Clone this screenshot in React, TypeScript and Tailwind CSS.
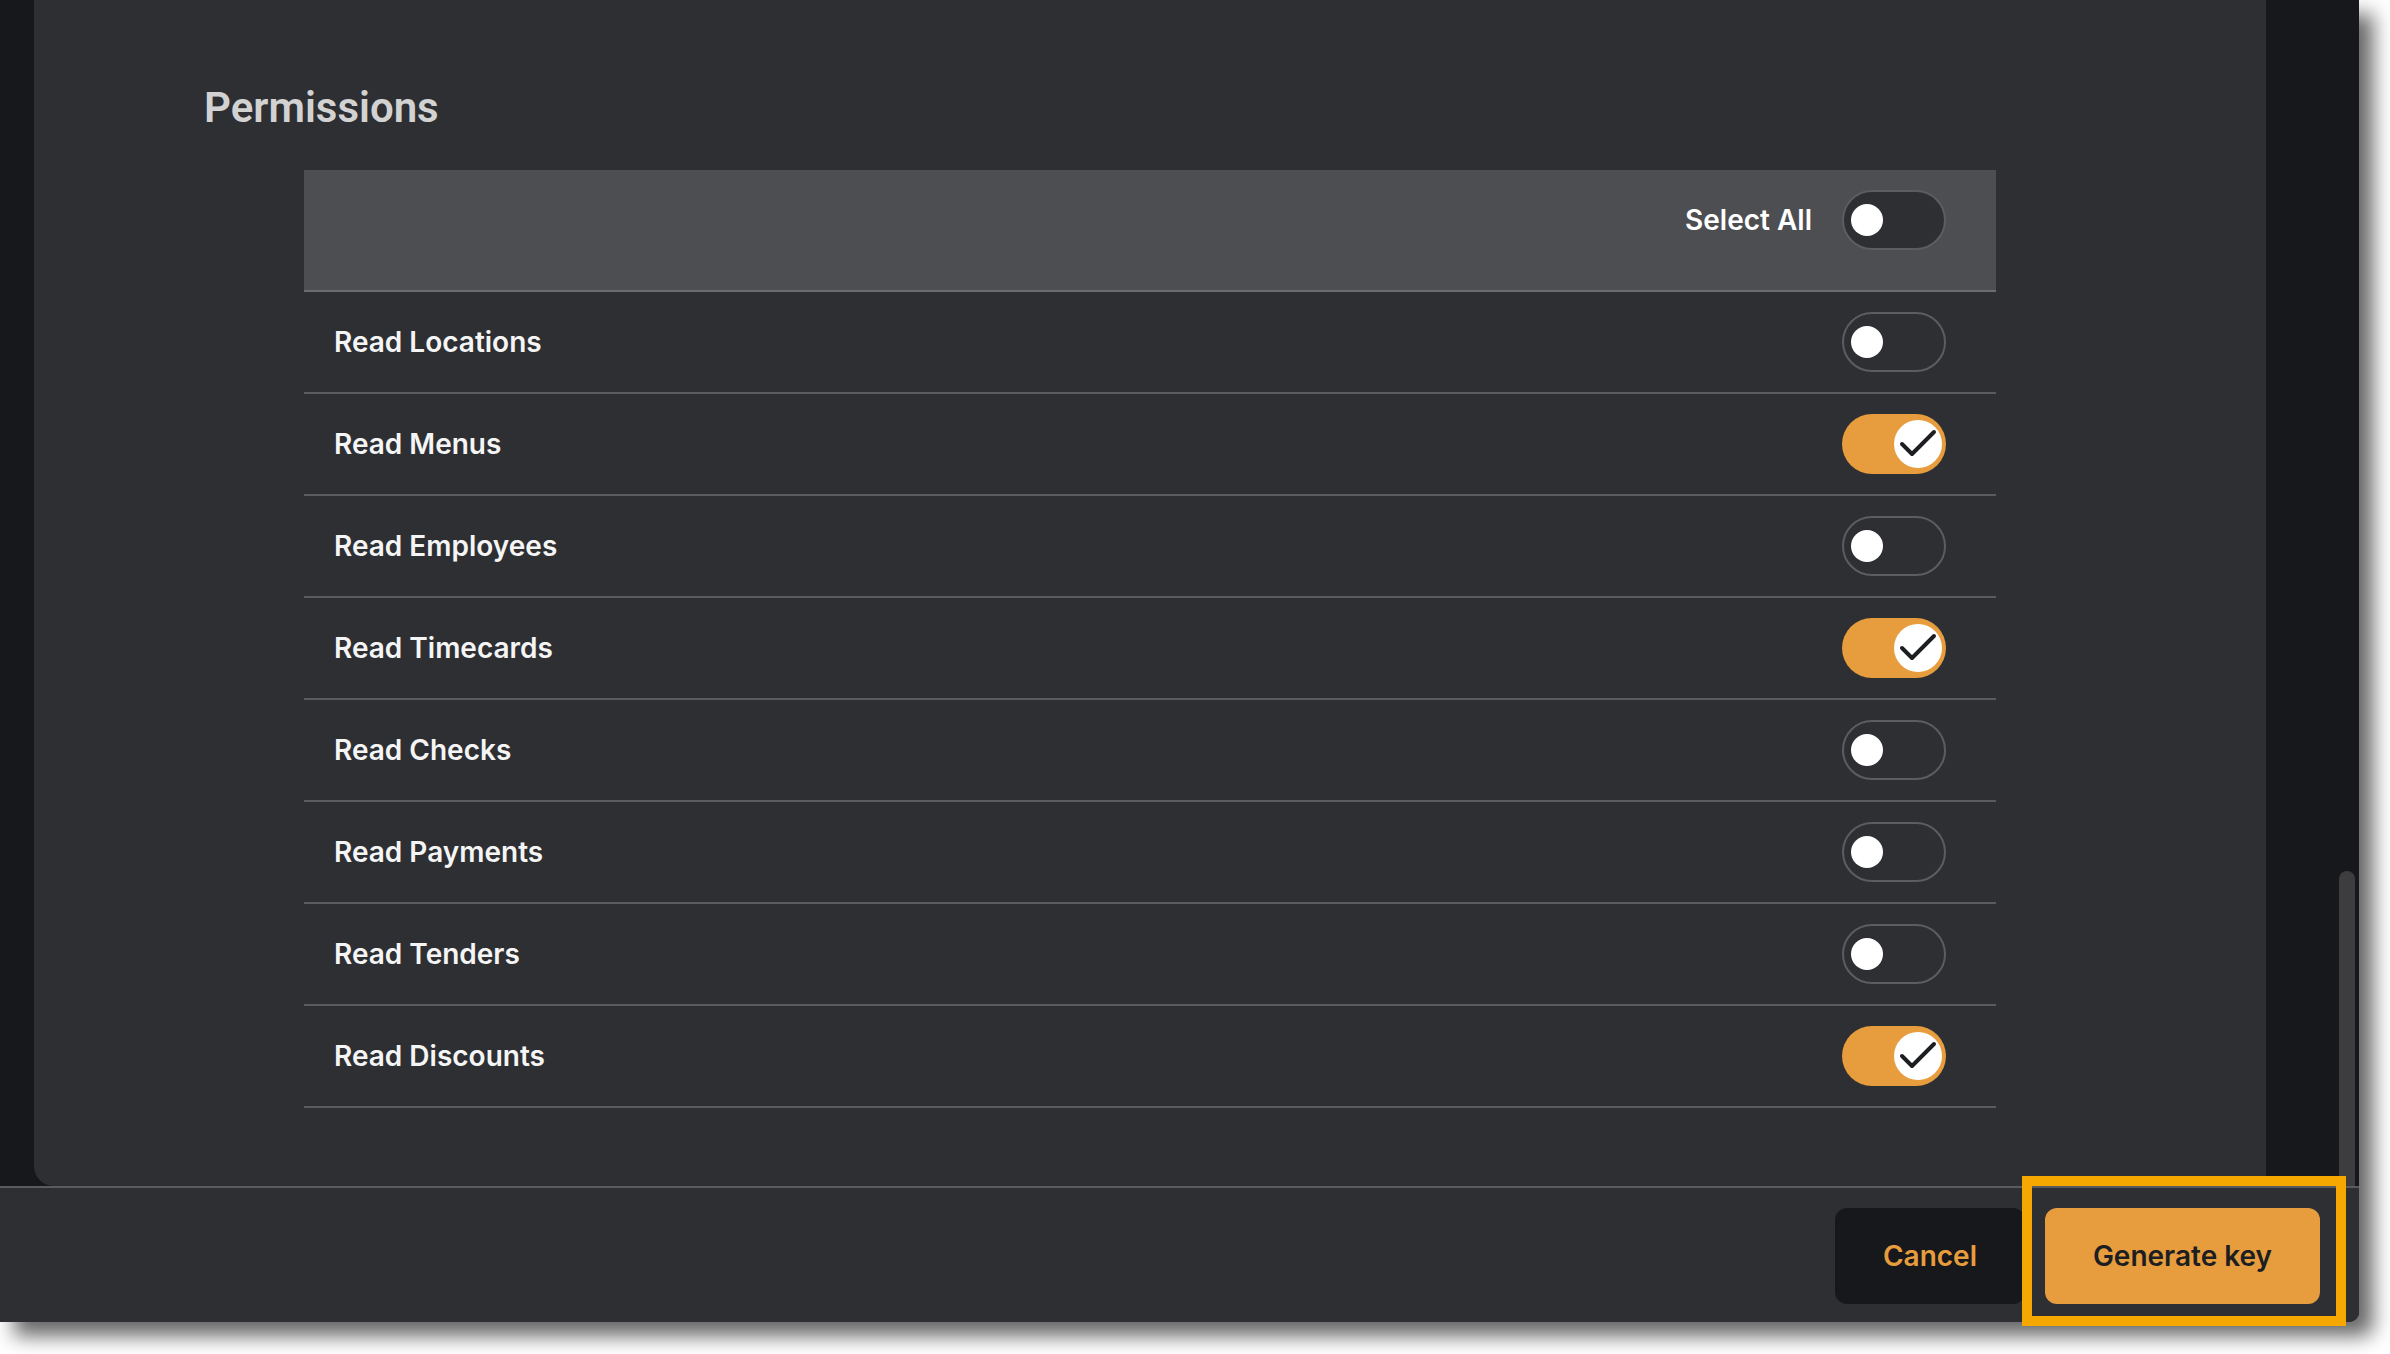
import React from "react";
import clsx from "clsx";
import { Check } from "lucide-react";

interface Permission {
  label: string;
  enabled: boolean;
}

const permissions: Permission[] = [
  { label: "Read Locations", enabled: false },
  { label: "Read Menus", enabled: true },
  { label: "Read Employees", enabled: false },
  { label: "Read Timecards", enabled: true },
  { label: "Read Checks", enabled: false },
  { label: "Read Payments", enabled: false },
  { label: "Read Tenders", enabled: false },
  { label: "Read Discounts", enabled: true },
];

const Toggle = ({ on }: { on: boolean }) => {
  return (
    <div
      className={clsx(
        "flex h-[60px] w-[104px] shrink-0 items-center rounded-full",
        on
          ? "justify-end bg-[#e79d3d] pr-1"
          : "border-2 border-[#5c5d61] bg-[#2e2f33] pl-[7px]"
      )}
    >
      {on ? (
        <span className="flex size-12 items-center justify-center rounded-full bg-white">
          <Check size={48} strokeWidth={2} className="text-[#1c1e22]" />
        </span>
      ) : (
        <span className="size-8 rounded-full bg-white" />
      )}
    </div>
  );
};

const PermissionRow = ({ label, enabled }: Permission) => {
  return (
    <div className="flex h-[102px] items-center justify-between border-b-2 border-[#5a5b5f] pl-[30px] pr-[50px]">
      <p className="text-[28px] font-semibold text-[#f5f5f5]">{label}</p>
      <Toggle on={enabled} />
    </div>
  );
};

const App = () => {
  return (
    <div
      className="min-h-screen w-full bg-white"
      style={{ fontFamily: "Inter, 'Liberation Sans', sans-serif" }}
    >
      <div className="flex h-[1322px] w-[2359px] flex-col rounded-br-[10px] bg-[#16181c] shadow-[14px_14px_20px_rgba(0,0,0,0.6)]">
        <div className="flex h-[1186px]">
          <div className="w-[34px] shrink-0" />

          <section className="flex w-[2232px] shrink-0 flex-col rounded-bl-[20px] bg-[#2e2f33] px-[170px] pt-[87px]">
            <h2 className="font-['Roboto',sans-serif] text-[42px] font-semibold leading-none text-[#d2d2d2]">
              Permissions
            </h2>

            <div className="mx-[100px] mt-[41px]">
              <div className="flex h-[122px] items-start justify-end gap-[30px] border-b-2 border-[#6b6c70] bg-[#4d4e52] pr-[50px] pt-5">
                <div className="flex h-[60px] items-center gap-[30px]">
                  <p className="text-[28px] font-semibold text-white">
                    Select All
                  </p>
                  <Toggle on={false} />
                </div>
              </div>
              {permissions.map((item) => (
                <PermissionRow key={item.label} {...item} />
              ))}
            </div>
          </section>

          {/* scrollbar */}
          <div className="flex flex-1 justify-end pr-1 pt-[871px]">
            <div className="w-4 rounded-t-full bg-[#3d3d3f]" />
          </div>
        </div>

        <footer className="flex flex-1 items-start justify-end gap-5 rounded-br-[10px] border-t-2 border-[#5a5b5f] bg-[#2e2f33] pr-[39px] pt-5">
          <button className="h-24 w-[190px] rounded-xl bg-[#16181c] text-[28px] font-semibold text-[#e79d3d]">
            Cancel
          </button>
          <div className="relative">
            <button className="h-24 w-[275px] rounded-xl bg-[#e79d3d] text-[28px] font-semibold text-[#1c1e22]">
              Generate key
            </button>
            <div className="pointer-events-none absolute -bottom-[22px] -left-[23px] -right-[26px] -top-[32px] border-[10px] border-[#f6a800]" />
          </div>
        </footer>
      </div>
    </div>
  );
};

export default App;
